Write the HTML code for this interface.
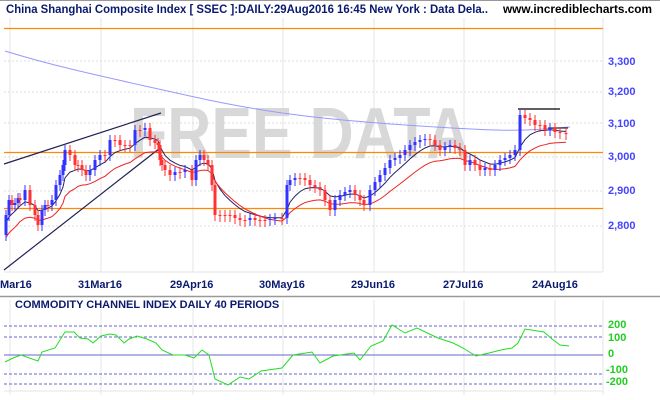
<!DOCTYPE html>
<html><head><meta charset="utf-8"><style>
body{margin:0;background:#fff;width:660px;height:400px;overflow:hidden;font-family:"Liberation Sans",Arial,sans-serif}
svg{display:block}
</style></head><body>
<svg id="s" width="660" height="400" xmlns="http://www.w3.org/2000/svg">
<rect width="660" height="400" fill="#fff"/>
<line x1="0" y1="0.5" x2="660" y2="0.5" stroke="#999"/>
<g stroke="#e4e4e4" stroke-width="1">
<line x1="10" y1="18" x2="10" y2="272"/><line x1="101" y1="18" x2="101" y2="272"/><line x1="193" y1="18" x2="193" y2="272"/><line x1="283" y1="18" x2="283" y2="272"/><line x1="374" y1="18" x2="374" y2="272"/><line x1="464" y1="18" x2="464" y2="272"/><line x1="555" y1="18" x2="555" y2="272"/>
<line x1="10" y1="300" x2="10" y2="395"/><line x1="101" y1="300" x2="101" y2="395"/><line x1="193" y1="300" x2="193" y2="395"/><line x1="283" y1="300" x2="283" y2="395"/><line x1="374" y1="300" x2="374" y2="395"/><line x1="464" y1="300" x2="464" y2="395"/><line x1="555" y1="300" x2="555" y2="395"/>
<line x1="603" y1="18" x2="603" y2="272"/><line x1="603" y1="300" x2="603" y2="395"/>
<line x1="4" y1="272" x2="603" y2="272"/>
</g>
<g stroke="#ddd" stroke-dasharray="2,2">
<line x1="4" y1="61" x2="603" y2="61"/><line x1="4" y1="92" x2="603" y2="92"/><line x1="4" y1="123" x2="603" y2="123"/><line x1="4" y1="157" x2="603" y2="157"/><line x1="4" y1="191" x2="603" y2="191"/><line x1="4" y1="226" x2="603" y2="226"/>
</g>
<text x="130" y="158" font-size="72" font-weight="bold" fill="#d8d8d8" textLength="340" lengthAdjust="spacingAndGlyphs">FREE DATA</text>
<line x1="4" y1="28.5" x2="603" y2="28.5" stroke="#f80" stroke-width="1.3"/>
<line x1="4" y1="152.5" x2="603" y2="152.5" stroke="#f80" stroke-width="1.3"/>
<line x1="4" y1="208.5" x2="603" y2="208.5" stroke="#f80" stroke-width="1.3"/>
<path d="M5,51 C60,68 110,78 190,96 S330,120 420,126 S520,131 570,127" fill="none" stroke="#99f" stroke-width="1"/>
<line x1="4" y1="164" x2="161" y2="113" stroke="#225" stroke-width="1.2"/>
<line x1="4" y1="270" x2="160" y2="148" stroke="#225" stroke-width="1.2"/>
<line x1="518" y1="109" x2="560" y2="109" stroke="#000" stroke-width="1.2"/>
<line x1="548" y1="128" x2="568" y2="128" stroke="#000" stroke-width="1"/>
<g id="c"></g>
<text x="6" y="13" font-size="12" font-weight="bold" fill="#0a1a6e" textLength="482" lengthAdjust="spacingAndGlyphs">China Shanghai Composite Index [ SSEC ]:DAILY:29Aug2016 16:45 New York : Data Dela..</text>
<text x="503" y="13" font-size="12" font-weight="bold" fill="#000" textLength="149" lengthAdjust="spacingAndGlyphs">www.incrediblecharts.com</text>
<g font-size="11" font-weight="bold" fill="#44f">
<text x="608" y="65">3,300</text><text x="608" y="95">3,200</text><text x="608" y="127">3,100</text><text x="608" y="160">3,000</text><text x="608" y="194">2,900</text><text x="608" y="229">2,800</text>
</g>
<g font-size="11" font-weight="bold" fill="#0a1a6e">
<text x="0" y="288">Mar16</text><text x="78" y="288">31Mar16</text><text x="170" y="288">29Apr16</text><text x="259" y="288">30May16</text><text x="351" y="288">29Jun16</text><text x="443" y="288">27Jul16</text><text x="532" y="288">24Aug16</text>
</g>
<line x1="0" y1="296.5" x2="660" y2="296.5" stroke="#999" stroke-width="1.5"/>
<text x="15" y="308" font-size="11" font-weight="bold" fill="#0a1a6e">COMMODITY CHANNEL INDEX DAILY 40 PERIODS</text>
<g stroke="#66c" stroke-dasharray="3,2">
<line x1="4" y1="326" x2="603" y2="326"/><line x1="4" y1="337" x2="603" y2="337"/><line x1="4" y1="374" x2="603" y2="374"/><line x1="4" y1="384" x2="603" y2="384"/>
</g>
<line x1="4" y1="355" x2="603" y2="355" stroke="#66c"/>
<line x1="4" y1="391" x2="603" y2="391" stroke="#e4e4e4"/>
<g font-size="11" font-weight="bold" fill="#2c2">
<text x="608" y="328">200</text><text x="608" y="341">100</text><text x="608" y="357">0</text><text x="606" y="373">-100</text><text x="606" y="385">-200</text>
</g>
<polyline fill="none" stroke="#2d2" stroke-width="1" points="5,362 13,358 21,355 38,361 42,352 55,348 65,332 74,332 80,338 88,339 93,343 101,336 110,334 116,335 124,343 129,339 137,336 147,339 156,343 162,350 173,355 185,355 194,358 202,350 209,355 215,379 228,385 240,377 249,379 261,371 282,368 293,355 312,352 320,363 333,356 354,353 360,360 371,346 383,341 392,325 405,333 417,328 438,338 453,343 463,348 476,356 489,353 501,350 512,348 518,343 525,329 544,332 552,339 560,345 569,346"/>
</svg>
<script>
var k=[[6,215],[9,200],[12,205],[15,203],[18,198],[20,200],[25,190],[30,205],[35,215],[38,225],[42,210],[45,205],[48,205],[52,200],[56,185],[60,175],[63,165],[65,150],[70,155],[75,165],[78,165],[82,170],[86,175],[90,170],[95,160],[100,155],[105,155],[110,140],[115,140],[120,145],[125,145],[130,145],[135,130],[140,130],[145,128],[150,140],[155,143],[158,145],[160,160],[162,165],[165,170],[170,175],[175,172],[180,172],[185,170],[192,180],[196,160],[200,155],[204,160],[208,165],[212,185],[215,215],[220,215],[225,215],[230,215],[235,218],[240,220],[245,220],[250,218],[255,220],[260,220],[265,220],[270,219],[275,218],[282,218],[287,185],[290,180],[295,178],[300,178],[305,180],[310,185],[315,187],[320,190],[325,200],[330,210],[335,200],[340,195],[345,192],[350,190],[355,195],[360,200],[364,205],[370,190],[375,182],[380,175],[385,168],[390,160],[395,158],[400,155],[405,150],[410,145],[415,142],[420,140],[425,139],[430,140],[435,145],[440,150],[445,147],[450,145],[455,148],[460,150],[465,165],[470,160],[475,165],[480,170],[485,168],[490,170],[495,165],[500,160],[505,158],[510,155],[515,150],[520,115],[525,118],[530,120],[535,125],[540,125],[545,130],[550,128],[555,132],[560,133],[566,133]];
var g=document.getElementById('c'),h='',p=k[0][1]+20,e1=k[0][1]+10,e2=k[0][1]+25,m1='',m2='';
for(var i=0;i<k.length;i++){var x=k[i][0],c=k[i][1],o=p;var up=c<o;var col=up?'#33f':'#f33';var t=Math.min(o,c),b=Math.max(o,c);if(b-t<1)b=t+1;
h+='<line x1="'+x+'" y1="'+(t-5)+'" x2="'+x+'" y2="'+(b+6)+'" stroke="'+col+'" stroke-width="1"/>';
h+='<rect x="'+(x-1.5)+'" y="'+t+'" width="3" height="'+(b-t)+'" fill="'+col+'"/>';
e1=e1+(c-e1)*0.25;e2=e2+(c+8-e2)*0.15;m1+=x+','+e1.toFixed(1)+' ';m2+=x+','+e2.toFixed(1)+' ';p=c;}
h='<polyline points="'+m1+'" fill="none" stroke="#226" stroke-width="1"/><polyline points="'+m2+'" fill="none" stroke="#e22" stroke-width="1"/>'+h;
g.innerHTML=h;
</script>
</body></html>
